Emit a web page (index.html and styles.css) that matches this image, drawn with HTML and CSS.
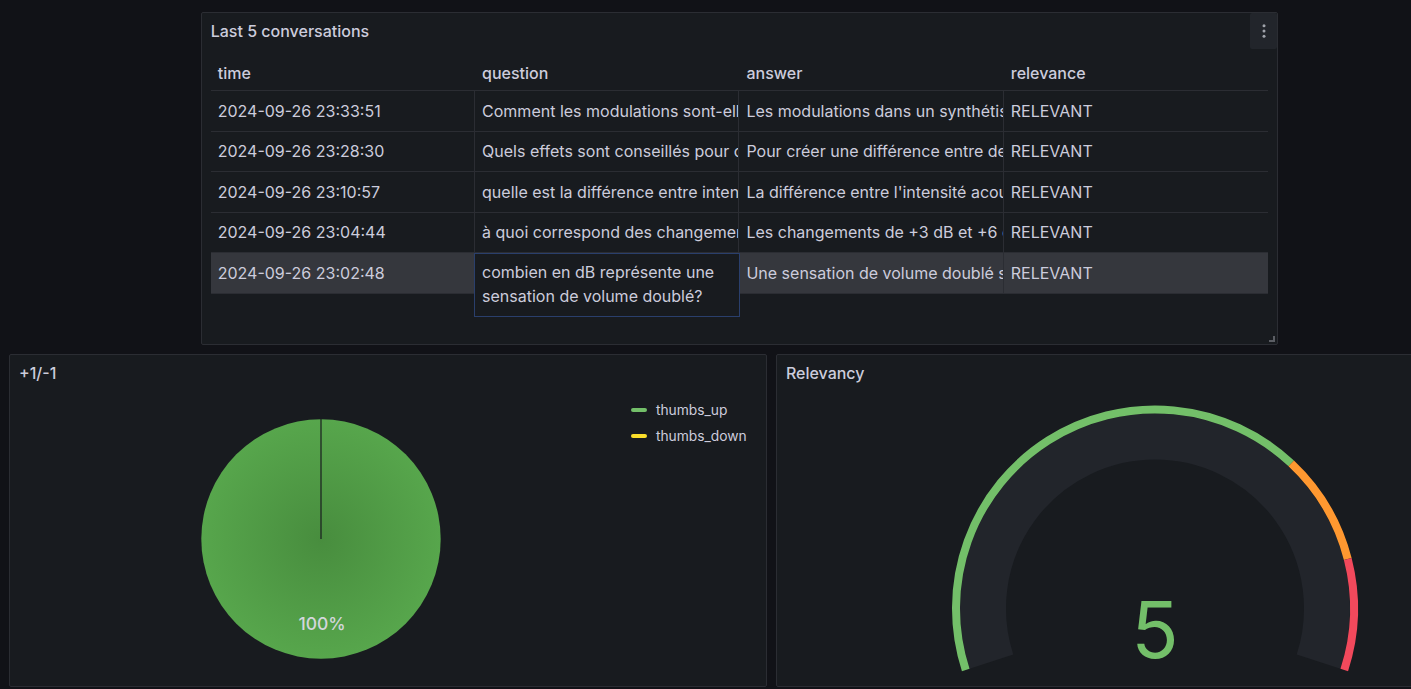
FILE: index.html
```html
<!DOCTYPE html>
<html lang="fr">
<head>
<meta charset="utf-8">
<title>Dashboard</title>
<link rel="stylesheet" href="styles.css">
</head>
<body>
<div class="dashboard">
  <section class="panel panel-table">
    <header class="panel-header">
      <h2 class="panel-title">Last 5 conversations</h2>
      <button class="menu-btn" aria-label="Menu">
        <svg width="16" height="16" viewBox="0 0 16 16"><circle cx="8" cy="2.8" r="1.5"/><circle cx="8" cy="8" r="1.5"/><circle cx="8" cy="13.2" r="1.5"/></svg>
      </button>
    </header>
    <div class="table-wrap">
      <div class="table">
        <div class="thead">
          <div class="th">time</div>
          <div class="th">question</div>
          <div class="th">answer</div>
          <div class="th">relevance</div>
        </div>
        <div class="tr">
          <div class="td">2024-09-26 23:33:51</div>
          <div class="td">Comment les modulations sont-elles utilisées dans un synthétiseur ?</div>
          <div class="td">Les modulations dans un synthétiseur permettent de faire varier un paramètre</div>
          <div class="td">RELEVANT</div>
        </div>
        <div class="tr">
          <div class="td">2024-09-26 23:28:30</div>
          <div class="td">Quels effets sont conseillés pour créer une différence entre deux sons ?</div>
          <div class="td">Pour créer une différence entre deux sons, on peut utiliser</div>
          <div class="td">RELEVANT</div>
        </div>
        <div class="tr">
          <div class="td">2024-09-26 23:10:57</div>
          <div class="td">quelle est la différence entre intensité acoustique et volume ?</div>
          <div class="td">La différence entre l'intensité acoustique et le volume perçu</div>
          <div class="td">RELEVANT</div>
        </div>
        <div class="tr">
          <div class="td">2024-09-26 23:04:44</div>
          <div class="td">à quoi correspond des changements de +3 dB et +6 dB ?</div>
          <div class="td">Les changements de +3 dB et +6 dB correspondent</div>
          <div class="td">RELEVANT</div>
        </div>
        <div class="tr tr-hover">
          <div class="td">2024-09-26 23:02:48</div>
          <div class="td td-expanded">
            <div class="cell-pop">combien en dB représente une sensation de volume doublé?</div>
          </div>
          <div class="td">Une sensation de volume doublé se traduit par une augmentation</div>
          <div class="td">RELEVANT</div>
        </div>
      </div>
    </div>
    <span class="resize-handle"></span>
  </section>

  <section class="panel panel-pie">
    <header class="panel-header">
      <h2 class="panel-title">+1/-1</h2>
    </header>
    <div class="pie-body">
      <div class="pie-area">
        <svg class="pie" width="240" height="240" viewBox="0 0 240 240">
          <defs>
            <radialGradient id="pieGrad" cx="50%" cy="50%" r="50%">
              <stop offset="0" stop-color="#488d3e"/>
              <stop offset="1" stop-color="#57a64c"/>
            </radialGradient>
          </defs>
          <circle cx="120" cy="120" r="119.7" fill="url(#pieGrad)"/>
          <line x1="120" y1="0" x2="120" y2="120" stroke="#181b1f" stroke-width="1.2"/>
          <text class="pie-label" x="121" y="211" text-anchor="middle">100%</text>
        </svg>
      </div>
      <ul class="legend">
        <li class="legend-item"><span class="swatch swatch-green"></span>thumbs_up</li>
        <li class="legend-item"><span class="swatch swatch-yellow"></span>thumbs_down</li>
      </ul>
    </div>
  </section>

  <section class="panel panel-gauge">
    <header class="panel-header">
      <h2 class="panel-title">Relevancy</h2>
    </header>
    <div class="gauge-body">
      <svg class="gauge" width="440" height="292" viewBox="0 0 440 292">
        <path d="M56.42 270.65 A172 172 0 1 1 383.58 270.65" fill="none" stroke="#22252b" stroke-width="46"/>
        <path d="M30.74 278.99 A199 199 0 0 1 356.23 72.43" fill="none" stroke="#73bf69" stroke-width="8"/>
        <path d="M356.23 72.43 A199 199 0 0 1 412.75 168.01" fill="none" stroke="#ff9830" stroke-width="8"/>
        <path d="M412.75 168.01 A199 199 0 0 1 409.26 278.99" fill="none" stroke="#f2495c" stroke-width="8"/>
        <text class="gauge-value" x="220" y="267" text-anchor="middle">5</text>
      </svg>
    </div>
  </section>
</div>
</body>
</html>
```

FILE: styles.css
```css
* { box-sizing: border-box; }

html, body {
  margin: 0;
  overflow: hidden;
  background: #111217;
}

body {
  font-family: Inter, "Noto Sans", sans-serif;
  color: #ccccdc;
  font-size: 16px;
}

.dashboard {
  display: grid;
  grid-template-columns: repeat(24, 54.92px);
  grid-template-rows: 333px 333px;
  column-gap: 9px;
  row-gap: 9px;
  padding: 12px 0 0 9px;
  width: max-content;
}

.panel {
  position: relative;
  display: flex;
  flex-direction: column;
  background: #181b1f;
  border: 1px solid #2b2d33;
  border-radius: 2px;
}

.panel-table { grid-column: 4 / span 17; grid-row: 1; }
.panel-pie { grid-column: 1 / span 12; grid-row: 2; overflow: hidden; }
.panel-gauge { grid-column: 13 / span 12; grid-row: 2; overflow: hidden; }

.panel-header {
  height: 36px;
  flex: none;
  display: flex;
  align-items: center;
  padding-left: 9px;
}

.panel-title {
  margin: 0;
  font-size: 16px;
  font-weight: 500;
  color: #ccccdc;
}

.menu-btn {
  margin-left: auto;
  width: 27px;
  height: 36px;
  padding: 0;
  border: none;
  border-radius: 2px;
  background: #22252b;
  display: flex;
  align-items: center;
  justify-content: center;
}

.menu-btn svg { fill: #a0a3ab; }

/* table */
.table-wrap {
  flex: 1;
  padding: 0 9px;
}

.table { width: 100%; }

.thead, .tr {
  display: grid;
  grid-template-columns: repeat(4, 1fr);
}

.thead {
  height: 42px;
  border-bottom: 1px solid #2b2d33;
  padding-top: 6px;
}

.th {
  display: flex;
  align-items: center;
  padding-left: 7px;
  font-weight: 500;
  color: #ccccdc;
}

.tr {
  height: 40.5px;
  border-bottom: 1px solid #2b2d33;
}

.td {
  display: flex;
  align-items: center;
  padding-left: 7px;
  white-space: nowrap;
  overflow: hidden;
  color: #ccccdc;
  border-right: 1px solid #2b2d33;
}

.td:last-child { border-right: none; }

.tr-hover { background: #35373d; }

.td-expanded {
  position: relative;
  overflow: visible;
}

.cell-pop {
  position: absolute;
  left: -1px;
  top: 0;
  width: 266px;
  padding: 6px 7px 8px;
  line-height: 24px;
  white-space: normal;
  background: #181b1f;
  border: 1px solid #2a3f6c;
  z-index: 2;
}

.resize-handle {
  position: absolute;
  right: 2px;
  bottom: 2px;
  width: 6px;
  height: 6px;
  border-right: 2px solid #5b5e64;
  border-bottom: 2px solid #5b5e64;
}

/* pie */
.pie-body {
  flex: 1;
  display: flex;
  padding: 0 9px;
}

.pie-area {
  flex: 1;
  display: flex;
  align-items: center;
  justify-content: center;
}

.pie { display: block; }

.pie-label {
  font-family: Inter, "Noto Sans", sans-serif;
  font-size: 17.5px;
  font-weight: 500;
  fill: #d3d6dc;
}

.legend {
  width: 134px;
  flex: none;
  margin: 0;
  padding: 8px 0 0 8px;
  list-style: none;
  display: flex;
  flex-direction: column;
  gap: 4px;
  font-size: 13.8px;
}

.legend-item {
  height: 22px;
  display: flex;
  align-items: center;
  color: #ccccdc;
}

.swatch {
  width: 16px;
  height: 4px;
  border-radius: 2px;
  margin-right: 9px;
}

.swatch-green { background: #73bf69; }
.swatch-yellow { background: #fade2a; }

/* gauge */
.gauge-body {
  flex: 1;
  display: flex;
  justify-content: center;
  align-items: flex-start;
}

.gauge { display: block; }

.gauge-value {
  font-family: Inter, "Noto Sans", sans-serif;
  font-size: 78px;
  font-weight: 400;
  fill: #73bf69;
}
```
